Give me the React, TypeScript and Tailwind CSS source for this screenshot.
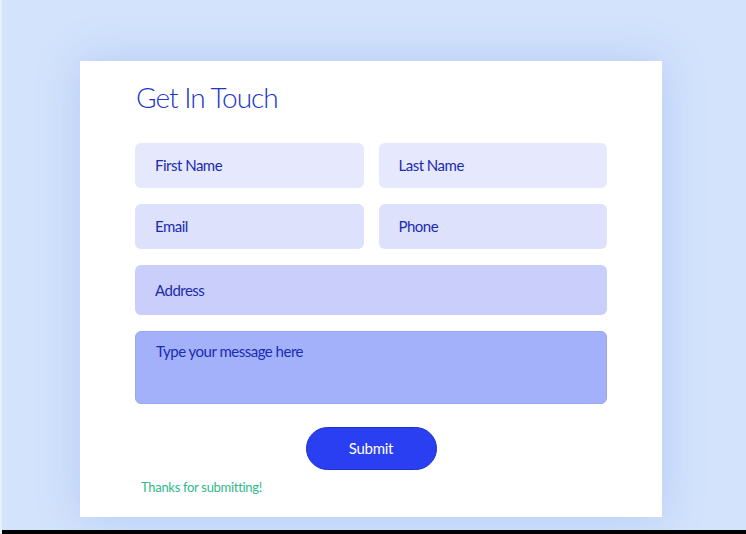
import React from "react"

const font = { fontFamily: '"Lato", "Open Sans", sans-serif' }

function Field({ label, className }: { label: string; className: string }) {
  return (
    <div className={`flex items-center rounded-md pl-5 text-[15px] tracking-[-0.5px] text-[#1b2bb0] ${className}`}>
      {label}
    </div>
  )
}

export default function App() {
  return (
    <div className="h-[534px] w-full bg-[#d3e3fc] flex flex-col border-l-2 border-[#e6f0fe]" style={font}>
      <div className="flex-1 pt-[61px] pl-[78px]">
        <div className="w-[582px] h-[456px] bg-white shadow-[0_0_40px_rgba(90,130,230,0.25)] px-[55px] pt-[18px] flex flex-col">
          <h1 className="text-[28px] font-light leading-[36px] tracking-[-1px] text-[#2136c9] pl-px">Get In Touch</h1>
          <div className="mt-[28px] grid grid-cols-2 gap-x-[15px] gap-y-[16px]">
            <Field label="First Name" className="h-[45px] bg-[#e6e8fd]" />
            <Field label="Last Name" className="h-[45px] bg-[#e6e8fd]" />
            <Field label="Email" className="h-[45px] bg-[#dee1fc]" />
            <Field label="Phone" className="h-[45px] bg-[#dee1fc]" />
            <Field label="Address" className="col-span-2 h-[50px] bg-[#c9cffa]" />
            <div className="col-span-2 h-[73px] rounded-md bg-[#a3b1fb] border border-[#9aa8f0] pl-5 pt-[8px] text-[15px] tracking-[-0.5px] text-[#1b2bb0]">
              Type your message here
            </div>
          </div>
          <div className="mt-[23px] flex justify-center">
            <button className="w-[131px] h-[43px] rounded-full bg-[#2a3ef2] border border-[#1d30c8] text-white text-[15px] tracking-[-0.3px]">
              Submit
            </button>
          </div>
          <p className="mt-[8px] pl-[6px] text-[13px] tracking-[-0.3px] text-[#2fb98a]">Thanks for submitting!</p>
        </div>
      </div>
      <div className="h-[4px] bg-black" />
    </div>
  )
}
